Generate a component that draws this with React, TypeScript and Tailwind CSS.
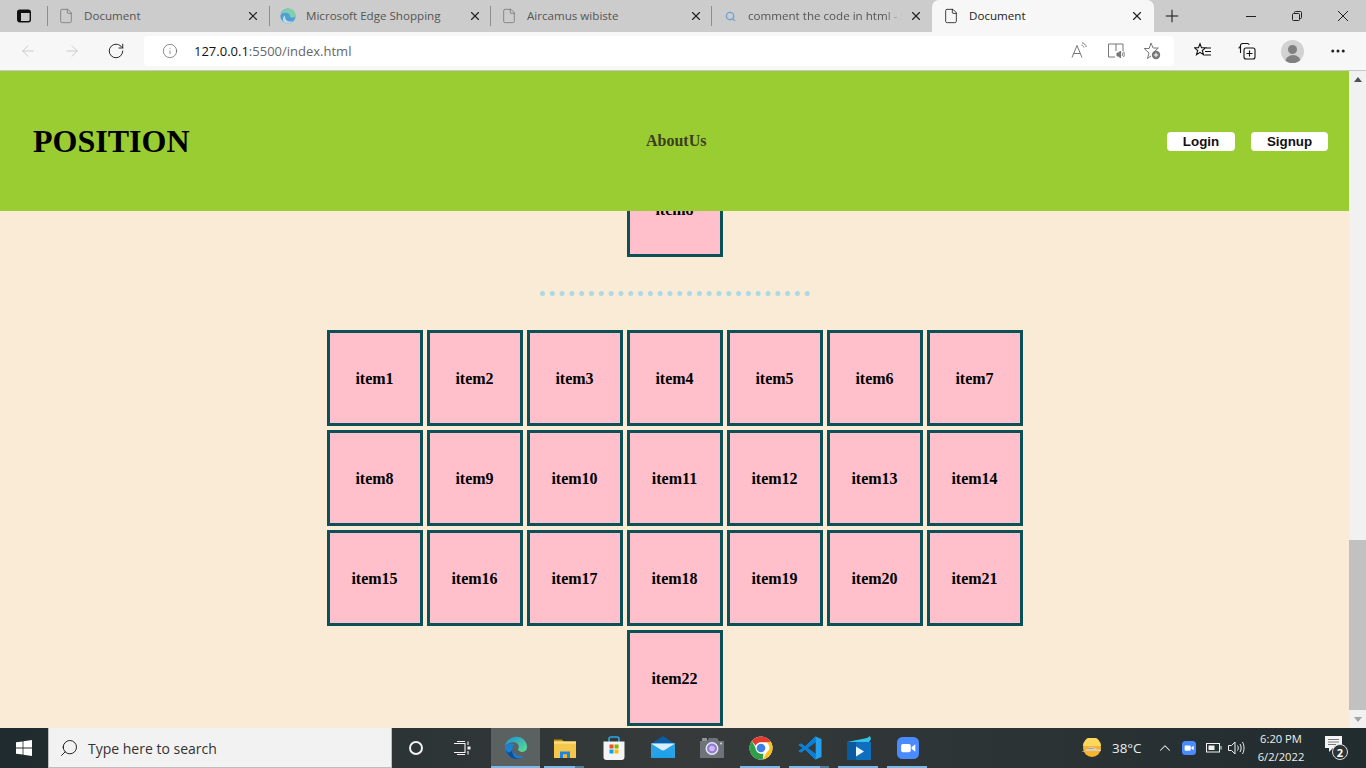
import { ArrowLeft, ArrowRight, ChevronUp, File, Info, MoreHorizontal, Plus, RotateCw, Search, X } from "lucide-react";

const ui = "font-['Open_Sans',sans-serif]";
const items = Array.from({ length: 22 }, (_, i) => `item${i + 1}`);

const SidebarIcon = () => (
  <svg width="16" height="16" viewBox="0 0 16 16" fill="none" stroke="#111" strokeWidth="1.4">
    <rect x="1.7" y="2.2" width="12.6" height="11.6" rx="2" />
    <path d="M2 2.5h12v2.5H2zM2 5h3v8.5H2z" fill="#111" stroke="none" />
  </svg>
);

const EdgeSmall = () => (
  <svg width="16" height="16" viewBox="0 0 16 16">
    <circle cx="8" cy="8" r="7.6" fill="#4f9fd0" />
    <path d="M1 6.500C2.500 2 6 .4 8.500.4c3.500 0 7 3 7 6.600 0 1.800-1.600 2.600-3 2.600-1.800 0-2.600-.8-2.600-1.600 0-2-2.200-3.500-4.400-3.200C3.800 5 2.200 5.500 1 6.500z" fill="#7fd0b0" />
    <path d="M5 8.500c0 3 2.500 5 5 5 1.500 0 2.500-.4 3.500-1-1.300 2-3.400 3-5.500 3-2 0-4-1-5-2.500C2.500 10 3.500 8 5 7.500z" fill="#bcd9ea" />
  </svg>
);

const Tab = ({ title, icon, fade, width }: { title: string; icon: React.ReactNode; fade?: boolean; width: string }) => (
  <div className={`flex h-[32px] items-center ${width}`}>
    <div className="h-[20px] w-px bg-[#8d8d8d]" />
    <div className="ml-[10px] flex w-[16px] justify-center">{icon}</div>
    <span
      className={`ml-[10px] whitespace-nowrap text-[11.6px] text-[#555] ${
        fade ? "w-[155px] [mask-image:linear-gradient(to_right,black_88%,transparent_100%)]" : "w-[148px]"
      }`}
    >
      {title}
    </span>
    <X size={14} strokeWidth={2} className={`text-[#222] ${fade ? "ml-[6px]" : "ml-[14px]"}`} />
  </div>
);

const TabBar = () => (
  <div className={`flex h-[32px] items-center bg-[#cccccc] ${ui}`}>
    <div className="flex w-[47px] justify-center pl-px">
      <SidebarIcon />
    </div>
    <Tab width="w-[222px]" title="Document" icon={<File size={16} strokeWidth={1} className="text-[#666]" />} />
    <Tab width="w-[221px]" title="Microsoft Edge Shopping" icon={<EdgeSmall />} />
    <Tab width="w-[221px]" title="Aircamus wibiste" icon={<File size={16} strokeWidth={1} className="text-[#666]" />} />
    <Tab width="w-[221px]" fade title="comment the code in html - S" icon={<Search size={11} strokeWidth={3} className="text-[#6ea2d3]" />} />
    <div className="flex h-[32px] w-[222px] items-center rounded-t-[7px] bg-[#f7f7f7]">
      <File size={16} strokeWidth={1.2} className="ml-[11px] text-[#111]" />
      <span className="ml-[10px] w-[148px] text-[11.6px] text-[#222]">Document</span>
      <X size={14} strokeWidth={2} className="ml-[13px] text-[#222]" />
    </div>
    <Plus size={20} strokeWidth={1.2} className="ml-[8px] text-[#111]" />
    <div className="ml-auto flex items-center pr-[18px]">
      <svg width="10" height="10" viewBox="0 0 10 10" stroke="#222" className="mr-[36px]">
        <path d="M0 5.500h10" />
      </svg>
      <svg width="10" height="10" viewBox="0 0 10 10" fill="none" stroke="#222" className="mr-[36px]">
        <rect x=".5" y="2.500" width="7" height="7" rx="1" />
        <path d="M2.500 2.500V1.500a1 1 0 0 1 1-1h5a1 1 0 0 1 1 1v5a1 1 0 0 1-1 1h-1" />
      </svg>
      <svg width="10" height="10" viewBox="0 0 10 10" stroke="#222">
        <path d="M0 0l10 10M10 0L0 10" />
      </svg>
    </div>
  </div>
);

const AddressIcons = () => (
  <div className="ml-auto flex items-center gap-[18px] pr-[13px]">
    <svg width="18" height="18" viewBox="0 0 18 18" fill="none" stroke="#777" strokeWidth="1">
      <path d="M1 15.500L6 3.500l5 12M2.800 11.500h6.400" />
      <path d="M10.500 3c1.300.3 2.200 1.200 2.500 2.500M11 .8c2.300.4 3.900 2 4.300 4.200" />
    </svg>
    <svg width="18" height="18" viewBox="0 0 18 18" fill="none" stroke="#777" strokeWidth="1">
      <path d="M8 15H1.500V2H9m0 0h7v7M9 2v7" />
      <path d="M10 11h1.500l2-2v7l-2-2H10z" fill="#777" />
      <path d="M15 10.500c.7 1 .7 2.500 0 3.500M16.500 9.500c1 1.500 1 4 0 5.500" />
    </svg>
    <svg width="18" height="18" viewBox="0 0 18 18" fill="none" stroke="#777" strokeWidth="1">
      <path d="M8 1l2.100 5h5.200l-4 3.500.5 2M6 11l-1.500 5.500L8 14M6 11L1.200 6.500h5L8 1" />
      <circle cx="13" cy="13" r="4.200" fill="#777" stroke="none" />
      <path d="M13 10.800v4.400M10.800 13h4.400" stroke="#fff" />
    </svg>
  </div>
);

const Toolbar = () => (
  <div className={`flex h-[39px] items-center border-b border-[#c9c9c9] bg-[#f7f7f7] ${ui}`}>
    <ArrowLeft size={18} strokeWidth={1} className="ml-[19px] text-[#bdbdbd]" />
    <ArrowRight size={18} strokeWidth={1} className="ml-[26px] text-[#bdbdbd]" />
    <RotateCw size={18} strokeWidth={1.3} className="ml-[26px] text-[#222]" />
    <div className="ml-[19px] flex h-[30px] w-[1030px] items-center rounded-[4px] bg-white">
      <Info size={16} strokeWidth={1} className="ml-[18px] text-[#555]" />
      <span className="ml-[16px] pt-[2px] text-[13px] text-[#666]">
        <span className="text-[#111]">127.0.0.1</span>:5500/index.html
      </span>
      <AddressIcons />
    </div>
    <svg width="18" height="18" viewBox="0 0 18 18" fill="none" stroke="#111" strokeWidth="1.1" className="ml-[20px]">
      <path d="M6 1.800l1.500 4h4l-3.200 2.700 1.200 4.200L6 10.300l-3.500 2.400 1.200-4.200L.5 5.800h4zM12 6h5M11 9.500h6M10.500 13H17" />
    </svg>
    <svg width="18" height="18" viewBox="0 0 18 18" fill="none" stroke="#111" strokeWidth="1.1" className="ml-[26px]">
      <path d="M2.500 11V3.500a2 2 0 0 1 2-2h5a2 2 0 0 1 1.800 1.200" />
      <path d="M1 6.500c0-1 1-2 2-2" />
      <rect x="6" y="6" width="11" height="11" rx="2" />
      <path d="M11.500 8.500v6M8.500 11.500h6" />
    </svg>
    <div className="ml-[25px] flex h-[23px] w-[23px] flex-col items-center justify-end overflow-hidden rounded-full bg-[#d2d2d2]">
      <div className="h-[9px] w-[9px] rounded-full bg-[#808080]" />
      <div className="mt-px h-[8px] w-[16px] rounded-t-full bg-[#808080]" />
    </div>
    <MoreHorizontal size={18} strokeWidth={2} className="ml-[25px] text-[#222]" />
  </div>
);

const Box = ({ label }: { label: string }) => (
  <div className="flex h-[96px] w-[96px] items-center justify-center border-[3px] border-[#0a5258] bg-[#ffc0cb] pr-px pt-[2px] font-['Liberation_Serif',serif] text-[16px] font-bold text-black">
    {label}
  </div>
);

const Header = () => (
  <header className="relative z-10 flex h-[140px] items-center bg-[#9acd32] pl-[33px] pr-[21px] font-['Liberation_Serif',serif]">
    <h1 className="w-[613px] text-[32px] font-bold text-black">POSITION</h1>
    <a className="text-[16px] font-bold text-[#3d3d1e]">AboutUs</a>
    <div className="ml-auto flex gap-[16px] font-['Liberation_Sans',sans-serif] text-[13.33px] font-bold text-[#111]">
      <button className="h-[19px] w-[68px] rounded-[4px] bg-white leading-[19px]">Login</button>
      <button className="h-[19px] w-[77px] rounded-[4px] bg-white leading-[19px]">Signup</button>
    </div>
  </header>
);

const Page = () => (
  <main className="min-w-0 flex-1 overflow-hidden bg-[#faebd7]">
    <Header />
    <div className="-mt-[50px] flex justify-center pl-px">
      <Box label="item8" />
    </div>
    <div className="mt-[34px] flex justify-center">
      <div className="w-[270px] border-t-[5px] border-dotted border-[#add8e6]" />
    </div>
    <div className="mt-[34px] flex justify-center pl-px">
      <div className="flex w-[696px] flex-wrap justify-center gap-[4px]">
        {items.map((item) => (
          <Box key={item} label={item} />
        ))}
      </div>
    </div>
  </main>
);

const Scrollbar = () => (
  <div className="flex w-[17px] flex-col bg-[#f1f1f1]">
    <div className="flex h-[17px] items-center justify-center">
      <div className="h-0 w-0 border-x-[4px] border-b-[5px] border-x-transparent border-b-[#505050]" />
    </div>
    <div className="mt-[452px] h-[170px] w-full bg-[#c1c1c1]" />
    <div className="mt-auto flex h-[17px] items-center justify-center">
      <div className="h-0 w-0 border-x-[4px] border-t-[5px] border-x-transparent border-t-[#a3a3a3]" />
    </div>
  </div>
);

const Edge = () => (
  <svg width="24" height="24" viewBox="0 0 26 26">
    <defs>
      <linearGradient id="eg1" x1="0" y1="0" x2="1" y2="1">
        <stop offset="0" stopColor="#1a8fd8" />
        <stop offset="1" stopColor="#5fe08f" />
      </linearGradient>
    </defs>
    <path d="M1 11C2.500 4.500 7.500.8 13.500.8 20 .8 25 6 25 12c0 3.500-2.600 5.200-5.200 5.200-2.600 0-4.600-1.300-4.600-2.800 0-.8.800-1 .8-2.500 0-3-3-5.200-6.500-5C6 7 3 8.500 1 11z" fill="url(#eg1)" />
    <path d="M1 11c-.5 7 5 14 12 14 3.800 0 6.700-1.500 9-4.200-1.500.7-3 1-4.500 1-4.500 0-8.500-3.500-8.500-7.500 0-2.500 1-4.300 2.500-5.500C7 7.500 2.500 8.500 1 11z" fill="#1c7fd0" />
    <path d="M9 15.300c-.5 5 3 9.700 8.500 9 0 0-2 .9-4.500.7-5.500-.2-10-5-11-10 1.500 3 4 4.500 7 .3z" fill="#0d4f96" />
  </svg>
);

const Explorer = () => (
  <svg width="24" height="24" viewBox="0 0 24 24">
    <path d="M1 3.500h8l2 2.500H1z" fill="#c98f16" />
    <rect x="1" y="5.500" width="22" height="16.500" fill="#f5c84c" />
    <rect x="1" y="5.500" width="22" height="2" fill="#ffe38a" />
    <path d="M7 22v-6.500h10V22h-3v-3.500h-4V22z" fill="#1f86d8" />
    <rect x="10" y="18.500" width="4" height="3.500" fill="#f9b233" />
  </svg>
);

const Store = () => (
  <svg width="24" height="26" viewBox="0 0 24 26">
    <path d="M7 8V4a2 2 0 0 1 2-2h6a2 2 0 0 1 2 2v4" fill="none" stroke="#2aa8e8" strokeWidth="1.600" />
    <path d="M1.500 6.500h21V22a3 3 0 0 1-3 3h-15a3 3 0 0 1-3-3z" fill="#f4f4f4" />
    <rect x="7.500" y="9.500" width="4" height="4" fill="#ef5124" />
    <rect x="12.500" y="9.500" width="4" height="4" fill="#7fba00" />
    <rect x="7.500" y="14.500" width="4" height="4" fill="#00a4ef" />
    <rect x="12.500" y="14.500" width="4" height="4" fill="#ffb900" />
  </svg>
);

const Mail = () => (
  <svg width="24" height="24" viewBox="0 0 24 24">
    <path d="M0 8L12 0l12 8v2H0z" fill="#0a5ea8" />
    <path d="M0 7.500h24V22H0z" fill="#27a3e6" />
    <path d="M0 7.500L12 15l12-7.500z" fill="#d9effb" />
    <path d="M0 22L12 14l12 8z" fill="#1aa0ea" opacity=".7" />
  </svg>
);

const Camera = () => (
  <svg width="24" height="20" viewBox="0 0 24 20">
    <rect x="2" y="0" width="5" height="4" fill="#8f949a" />
    <path d="M0 3h7l2-3h8l2 3h5v17H0z" fill="#6e7379" />
    <circle cx="12" cy="10.500" r="6.500" fill="#e8e8ee" />
    <circle cx="12" cy="10.500" r="5" fill="#8c7ddd" />
    <circle cx="12" cy="10.500" r="2.800" fill="#d3b8f0" />
    <circle cx="21" cy="5.500" r="1" fill="#d9d9d9" />
  </svg>
);

const Chrome = () => (
  <svg width="24" height="24" viewBox="0 0 24 24">
    <circle cx="12" cy="12" r="11.500" fill="#fff" />
    <path d="M12 .5a11.500 11.500 0 0 1 10 5.800H12a5.700 5.700 0 0 0-5.300 3.500L2.800 5.100A11.500 11.500 0 0 1 12 .5z" fill="#e33b2e" />
    <path d="M22 6.300a11.500 11.500 0 0 1-8.300 17.100l4.100-7.100a5.700 5.700 0 0 0-.8-10z" fill="#fbc116" />
    <path d="M13.700 23.400A11.500 11.500 0 0 1 2.800 5.100l5 8.800a5.700 5.700 0 0 0 6.700 3.700z" fill="#2f9e44" />
    <circle cx="12" cy="12" r="5.500" fill="#fff" />
    <circle cx="12" cy="12" r="4.300" fill="#3d7fe6" />
  </svg>
);

const VsCode = () => (
  <svg width="24" height="24" viewBox="0 0 24 24">
    <path d="M17.500.5L23.500 3v18l-6 2.500L7 13.500l-4 3-2.500-1.500L5 12 .5 9 3 7.500l4 3z" fill="#23a0ee" />
    <path d="M17.500.5L7 10.500l-4-3L.5 9 5 12 .5 15 3 16.500l4-3 10.500 10L18 18V6z" fill="#0b7fd6" />
    <path d="M17.500 6.500v11L10 12z" fill="#363a3a" />
  </svg>
);

const ClipVideo = () => (
  <svg width="24" height="24" viewBox="0 0 24 24">
    <path d="M0 6l20-4 3-2 1 3-2 3z" fill="#32c5e8" />
    <rect x="0" y="6" width="24" height="18" fill="#0f6fbe" />
    <rect x="0" y="6" width="9" height="18" fill="#0a5aa0" />
    <path d="M9 10.500l8 5-8 5z" fill="#e9f4fb" />
  </svg>
);

const ZoomIcon = ({ size }: { size: number }) => (
  <svg width={size} height={size} viewBox="0 0 24 24">
    <rect width="24" height="24" rx="6" fill="#4a8cff" />
    <rect x="4.500" y="7.500" width="10.500" height="9" rx="2" fill="#fff" />
    <path d="M16 11l4-3v8l-4-3z" fill="#fff" />
  </svg>
);

const Weather = () => (
  <svg width="20" height="20" viewBox="0 0 20 20">
    <circle cx="10" cy="10" r="9" fill="#f7b32b" />
    <path d="M1 8a9 9 0 0 1 18 0z" fill="#fdd85d" />
    <path d="M0 13.500h3c1-3 4-5 7-4 2-1 4 .5 5 2h4v1.500H0z" fill="#d9d0bd" />
    <path d="M5 10.500h7" stroke="#a89f8c" strokeWidth=".8" />
  </svg>
);

const TaskIcon = ({ children, run, active, extra }: { children: React.ReactNode; run?: boolean; active?: boolean; extra?: boolean }) => (
  <div className={`relative flex h-[40px] w-[49px] items-center justify-center ${active ? "bg-[#5b6060]" : ""}`}>
    {children}
    {run && (
      <div className={`absolute bottom-0 flex h-[2px] ${active ? "left-0 w-full" : "left-[4px] w-[40px]"}`}>
        <div className="flex-1 bg-[#76b9ed]" />
        {extra && <div className="w-[9px] bg-[#4d7f9f]" />}
      </div>
    )}
  </div>
);

const Taskbar = () => (
  <footer className={`flex h-[40px] items-center bg-gradient-to-r from-[#1f2b2e] via-[#363a3a] to-[#212c2f] text-white ${ui}`}>
    <div className="flex w-[48px] justify-center">
      <svg width="16" height="16" viewBox="0 0 16 16" fill="#fff">
        <path d="M0 2.300l6.600-.9v6.200H0zM7.400 1.300L16 0v7.600H7.400zM0 8.400h6.600v6.200L0 13.700zM7.400 8.400H16V16l-8.600-1.200z" />
      </svg>
    </div>
    <div className="flex h-[40px] w-[344px] items-center border-x border-b border-[#bdbdbd] bg-[#f2f2f2] text-[#222]">
      <Search size={20} strokeWidth={1.1} className="ml-[10px] -scale-x-100 text-[#111]" />
      <span className="ml-[9px] pt-[2px] text-[14px] text-[#333]">Type here to search</span>
    </div>
    <div className="flex w-[48px] justify-center">
      <div className="h-[14px] w-[14px] rounded-full border-2 border-[#f1f1f1]" />
    </div>
    <div className="flex w-[51px] justify-center pr-[5px]">
      <svg width="18" height="14" viewBox="0 0 18 14" fill="none" stroke="#f1f1f1" strokeWidth="1.100">
        <path d="M0 2.500h11v9H0M3 .5h8M3 13.500h8M14 .500v3.500M14 10v3.500" />
        <path d="M13.500 5.500h3v3h-3z" fill="#f1f1f1" stroke="none" />
      </svg>
    </div>
    <TaskIcon run active>
      <Edge />
    </TaskIcon>
    <TaskIcon run extra>
      <Explorer />
    </TaskIcon>
    <TaskIcon>
      <Store />
    </TaskIcon>
    <TaskIcon>
      <Mail />
    </TaskIcon>
    <TaskIcon>
      <Camera />
    </TaskIcon>
    <TaskIcon run>
      <Chrome />
    </TaskIcon>
    <TaskIcon run extra>
      <VsCode />
    </TaskIcon>
    <TaskIcon run>
      <ClipVideo />
    </TaskIcon>
    <TaskIcon run>
      <ZoomIcon size={22} />
    </TaskIcon>
    <div className="ml-auto flex items-center">
      <Weather />
      <span className="ml-[10px] w-[29px] whitespace-nowrap text-[13.4px] text-[#eee]">38°C</span>
      <ChevronUp size={18} strokeWidth={1.4} className="ml-[15px] text-[#eee]" />
      <div className="ml-[8px]">
        <ZoomIcon size={14} />
      </div>
      <svg width="16" height="10" viewBox="0 0 16 10" className="ml-[10px]" fill="none" stroke="#f1f1f1">
        <rect x=".5" y=".5" width="13" height="8.500" />
        <rect x="2.500" y="2.500" width="6" height="4.500" fill="#f1f1f1" stroke="none" />
        <path d="M15 3v3.500" />
      </svg>
      <svg width="17" height="14" viewBox="0 0 17 14" className="ml-[6px]" fill="none" stroke="#f1f1f1">
        <path d="M.5 4.500h3L7 1v12L3.500 9.500h-3z" />
        <path d="M9.500 4.500c1 1.500 1 3.500 0 5M12 3c1.500 2.500 1.500 5.500 0 8M14.500 1c2 3.500 2 8.500 0 12" />
      </svg>
      <div className="flex w-[72px] flex-col items-center text-[11.2px] leading-[18px] text-[#eee]">
        <span>6:20 PM</span>
        <span>6/2/2022</span>
      </div>
      <div className="relative ml-[8px] mr-[23px] h-[24px] w-[18px]">
        <svg width="17" height="16" viewBox="0 0 17 16" fill="#f4f4f4">
          <path d="M0 0h17v12H8l-4 4v-4H0z" />
          <path d="M3 3.500h11M3 6h11M3 8.500h8" stroke="#444" strokeWidth=".7" />
        </svg>
        <div className="absolute left-[7px] top-[8px] flex h-[16px] w-[16px] items-center justify-center rounded-full border border-[#ddd] bg-[#2c3436] text-[11px] font-bold leading-none">
          2
        </div>
      </div>
    </div>
  </footer>
);

export default function App() {
  return (
    <div className="flex h-screen w-screen flex-col overflow-hidden">
      <TabBar />
      <Toolbar />
      <div className="flex min-h-0 flex-1">
        <Page />
        <Scrollbar />
      </div>
      <Taskbar />
    </div>
  );
}
